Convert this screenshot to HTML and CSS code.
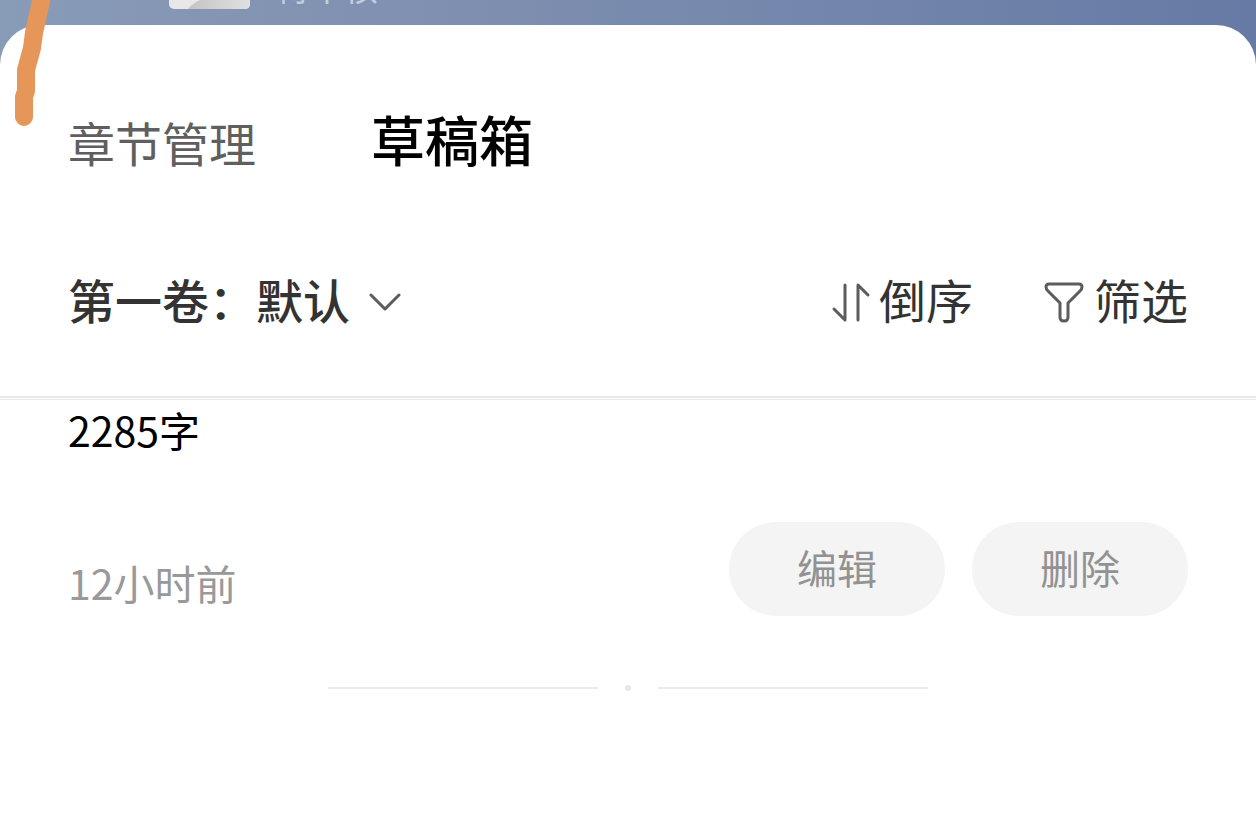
FILE: index.html
```html
<!DOCTYPE html>
<html lang="zh-CN">
<head>
<meta charset="utf-8">
<title>草稿箱</title>
<link rel="stylesheet" href="styles.css">
</head>
<body>
<header class="book">
    <svg class="cover" viewBox="0 0 81 108" aria-hidden="true">
        <defs>
            <linearGradient id="shade" x1="0" x2="1">
                <stop offset="0" stop-color="#c4c4c4"/>
                <stop offset="1" stop-color="#e0e0e0"/>
            </linearGradient>
        </defs>
        <rect width="81" height="108" rx="5" fill="#e8e8e8"/>
        <path d="M19 108C24 101 34 98 48 90H81V103Q81 108 76 108Z" fill="url(#shade)"/>
    </svg>
    <p class="status">待审核</p>
</header>
<main class="sheet">
    <nav class="tabs">
        <a class="tab" href="#chapters">章节管理</a>
        <a class="tab active" href="#drafts">草稿箱</a>
    </nav>
    <div class="toolbar">
        <button class="volume">第一卷：默认
            <svg class="arrow" viewBox="0 0 32 20" aria-hidden="true"><path d="M2 3L16 17L30 3"/></svg>
        </button>
        <div class="tools">
            <button class="tool">
                <svg class="icon" viewBox="0 0 40 42" aria-hidden="true"><path d="M5 28L16 39V4M29 39V4L39 14"/></svg>倒序
            </button>
            <button class="tool">
                <svg class="icon" viewBox="0 0 40 42" aria-hidden="true"><path d="M5 3H35Q38 3 38 6Q38 8 36 10L24 22V36Q24 40 20 40Q16 40 16 36V22L4 10Q2 8 2 6Q2 3 5 3Z"/></svg>筛选
            </button>
        </div>
    </div>
    <article class="draft">
        <p class="words">2285字</p>
        <div class="row">
            <p class="time">12小时前</p>
            <div class="actions">
                <button class="pill">编辑</button>
                <button class="pill">删除</button>
            </div>
        </div>
    </article>
    <div class="end"><span class="line"></span><span class="dot"></span><span class="line"></span></div>
</main>
<!-- marker stroke over the page corner -->
<svg class="stroke" viewBox="0 0 60 130" aria-hidden="true"><path d="M43 -8L34 33L32 48L26 70V91L24 97V117"/></svg>
</body>
</html>
```

FILE: styles.css
```css
* {
    box-sizing: border-box;
}

body {
    margin: 0;
    min-height: 100vh;
    display: flex;
    flex-direction: column;
    background: linear-gradient(90deg, #889bb7 0, #7f90b0 35%, #667aa5 100%) top / 100% 80px no-repeat #fff;
    font-family: "Noto Sans CJK SC", sans-serif;
    color: #333;
}

p {
    margin: 0;
}

button {
    margin: 0;
    padding: 0;
    border: 0;
    background: none;
    font: inherit;
    color: inherit;
}

svg {
    fill: none;
    stroke: #5c5c5c;
    stroke-width: 3;
    stroke-linecap: round;
    stroke-linejoin: round;
}

.book {
    display: flex;
    align-items: flex-end;
    gap: 26px;
    height: 25px;
    padding: 0 169px 16px;
}

.cover {
    flex: none;
    width: 81px;
    height: 108px;
    stroke: none;
}

.status {
    padding-bottom: 2px;
    font-size: 34px;
    line-height: 40px;
    color: #c3cede;
}

.sheet {
    flex: 1;
    border-radius: 40px 40px 0 0;
    background: #fff;
}

.tabs {
    display: flex;
    align-items: baseline;
    gap: 115px;
    padding: 74px 68px 0;
    line-height: 80px;
}

.tab {
    font-size: 47px;
    color: #5f5f5f;
    text-decoration: none;
}

.tab.active {
    font-size: 54px;
    font-weight: 500;
    color: #000;
}

.toolbar {
    display: flex;
    justify-content: space-between;
    align-items: center;
    height: 216px;
    padding: 20px 68px 0;
    border-bottom: 2px solid #e6e9ea;
    font-size: 47px;
    line-height: 60px;
}

.volume {
    display: flex;
    align-items: center;
    gap: 19px;
    font-weight: 500;
}

.arrow {
    width: 32px;
    height: 20px;
    margin-top: 6px;
}

.tools {
    display: flex;
    gap: 71px;
}

.tool {
    display: flex;
    align-items: center;
    gap: 10px;
}

.icon {
    width: 40px;
    height: 42px;
    margin-top: 6px;
    overflow: visible;
}

.draft {
    margin-top: 1px;
    padding: 0 68px;
    border-top: 1px solid #e6e9ea;
    font-size: 41px;
}

.words {
    line-height: 58px;
    color: #000;
}

.row {
    display: flex;
    justify-content: space-between;
    padding-top: 64px;
}

.time {
    padding-top: 30px;
    line-height: 60px;
    color: #999;
}

.actions {
    display: flex;
    gap: 27px;
}

.pill {
    width: 216px;
    height: 94px;
    padding-bottom: 4px;
    border-radius: 47px;
    background: #f4f4f4;
    font-size: 40px;
    color: #929292;
}

.end {
    display: flex;
    justify-content: center;
    align-items: center;
    gap: 27px;
    padding-top: 69px;
}

.line {
    width: 270px;
    height: 2px;
    background: #ebebeb;
}

.dot {
    width: 6px;
    height: 6px;
    border-radius: 50%;
    background: #e6e6e6;
}

.stroke {
    position: absolute;
    top: 0;
    left: 0;
    width: 60px;
    height: 130px;
    stroke: #e69658;
    stroke-width: 18;
}
```
